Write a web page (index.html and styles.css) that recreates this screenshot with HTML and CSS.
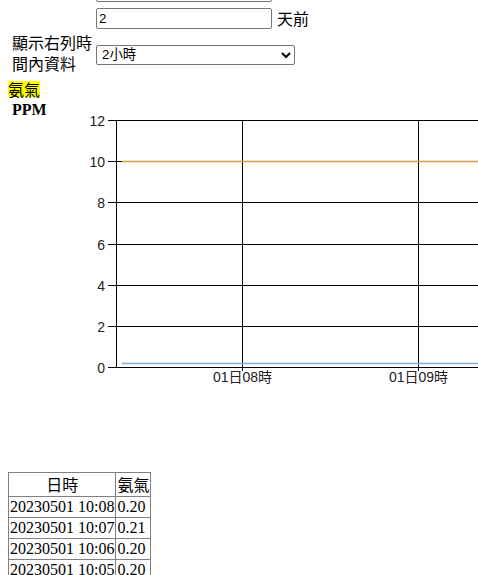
FILE: index.html
```html
<!DOCTYPE html>
<html lang="zh-Hant">
<head>
    <meta charset="UTF-8">
    <meta name="viewport" content="width=device-width, initial-scale=1.0">
    <title>氨氣監測</title>
    <link rel="stylesheet" href="styles.css">
</head>
<body>
    <div class="filters">
        <div class="row row-prev">
            <div class="row-label"></div>
            <input class="text-input" type="text" name="start" value="">
        </div>
        <div class="row row-days">
            <div class="row-label"></div>
            <input class="text-input" type="text" name="days" value="2">
            <span class="unit-text">天前</span>
        </div>
        <div class="row row-range">
            <div class="row-label">顯示右列時間內資料</div>
            <select class="range-select" name="range">
                <option value="1">1小時</option>
                <option value="2" selected>2小時</option>
                <option value="6">6小時</option>
                <option value="12">12小時</option>
                <option value="24">24小時</option>
            </select>
        </div>
    </div>

    <div class="gas-name"><span class="highlight">氨氣</span></div>

    <div class="chart-row">
        <div class="chart-unit">PPM</div>
        <svg class="chart" width="390" height="371" viewBox="0 0 390 371">
            <!-- horizontal grid + ticks -->
            <g class="grid">
                <line x1="20" y1="19.5" x2="390" y2="19.5"/>
                <line x1="20" y1="60.5" x2="390" y2="60.5"/>
                <line x1="20" y1="101.5" x2="390" y2="101.5"/>
                <line x1="20" y1="143.5" x2="390" y2="143.5"/>
                <line x1="20" y1="184.5" x2="390" y2="184.5"/>
                <line x1="20" y1="225.5" x2="390" y2="225.5"/>
                <line x1="20" y1="266.5" x2="390" y2="266.5"/>
                <line x1="28.5" y1="19.5" x2="28.5" y2="266.5"/>
                <line x1="154.5" y1="19.5" x2="154.5" y2="270"/>
                <line x1="330.5" y1="19.5" x2="330.5" y2="270"/>
            </g>
            <g class="y-labels">
                <text x="17" y="24.5">12</text>
                <text x="17" y="65.5">10</text>
                <text x="17" y="106.5">8</text>
                <text x="17" y="148.5">6</text>
                <text x="17" y="189.5">4</text>
                <text x="17" y="230.5">2</text>
                <text x="17" y="271.5">0</text>
            </g>
            <g class="x-labels">
                <text x="154.5" y="281">01日08時</text>
                <text x="330.5" y="281">01日09時</text>
            </g>
            <line class="series-limit" x1="34" y1="60.5" x2="390" y2="60.5"/>
            <line class="series-value" x1="34" y1="262.5" x2="390" y2="262.5"/>
        </svg>
    </div>

    <table class="data-table">
        <tr><td class="head">日時</td><td class="head">氨氣</td></tr>
        <tr><td>20230501 10:08</td><td>0.20</td></tr>
        <tr><td>20230501 10:07</td><td>0.21</td></tr>
        <tr><td>20230501 10:06</td><td>0.20</td></tr>
        <tr><td>20230501 10:05</td><td>0.20</td></tr>
    </table>
</body>
</html>
```

FILE: styles.css
```css
html {
    overflow: hidden;
}
body {
    margin: 0;
    padding: 0 8px;
    font-family: "Liberation Serif", "Noto Sans CJK TC", serif;
    font-size: 16px;
    color: #000;
    background-color: #fff;
}
.filters {
    margin-left: 4px;
    margin-top: -19px;
    line-height: 21px;
}
.row {
    display: flex;
    align-items: center;
}
.row-label {
    width: 84px;
    flex: none;
    font-family: "Noto Sans CJK TC", sans-serif;
}
.row-days {
    margin-top: 6px;
}
.row-range {
    margin-top: 3px;
}
.text-input {
    width: 176px;
    height: 21px;
    box-sizing: border-box;
    padding: 1px 2px;
    border: 1px solid #767676;
    border-radius: 2px;
    font-family: "Liberation Sans", "Noto Sans CJK TC", sans-serif;
    font-size: 13.33px;
    margin: 0;
}
.unit-text {
    margin-left: 5px;
    font-family: "Noto Sans CJK TC", sans-serif;
}
.range-select {
    width: 199px;
    height: 20px;
    margin: 3px 0 0 0;
    padding: 0 0 0 1px;
    border: 1px solid #767676;
    border-radius: 2px;
    background-color: #fff;
    font-family: "Liberation Sans", "Noto Sans CJK TC", sans-serif;
    font-size: 13.33px;
}
.gas-name {
    margin-top: 7px;
    line-height: 16px;
    font-family: "Noto Sans CJK TC", sans-serif;
}
.highlight {
    display: inline-block;
    height: 16px;
    line-height: 16px;
    background-color: #ffff00;
}
.chart-row {
    display: flex;
    margin-top: 4px;
}
.chart-unit {
    width: 76px;
    flex: none;
    padding-left: 4px;
    font-weight: bold;
    line-height: 18px;
}
.chart {
    display: block;
    flex: none;
}
.chart .grid line {
    stroke: #000;
    stroke-width: 1;
}
.chart text {
    font-family: "Liberation Sans", "Noto Sans CJK TC", sans-serif;
    font-size: 14px;
    fill: #222;
}
.chart .y-labels text {
    text-anchor: end;
}
.chart .x-labels text {
    text-anchor: middle;
}
.series-limit {
    stroke: #d89a44;
    stroke-width: 1.6;
}
.series-value {
    stroke: #7eaae6;
    stroke-width: 1.6;
}
.data-table {
    border-collapse: collapse;
    margin-top: 0;
}
.data-table td {
    border: 1px solid #808080;
    padding: 1px;
    line-height: 18px;
    white-space: nowrap;
}
.data-table td.head {
    text-align: center;
    line-height: 21px;
    font-family: "Noto Sans CJK TC", sans-serif;
}
```
